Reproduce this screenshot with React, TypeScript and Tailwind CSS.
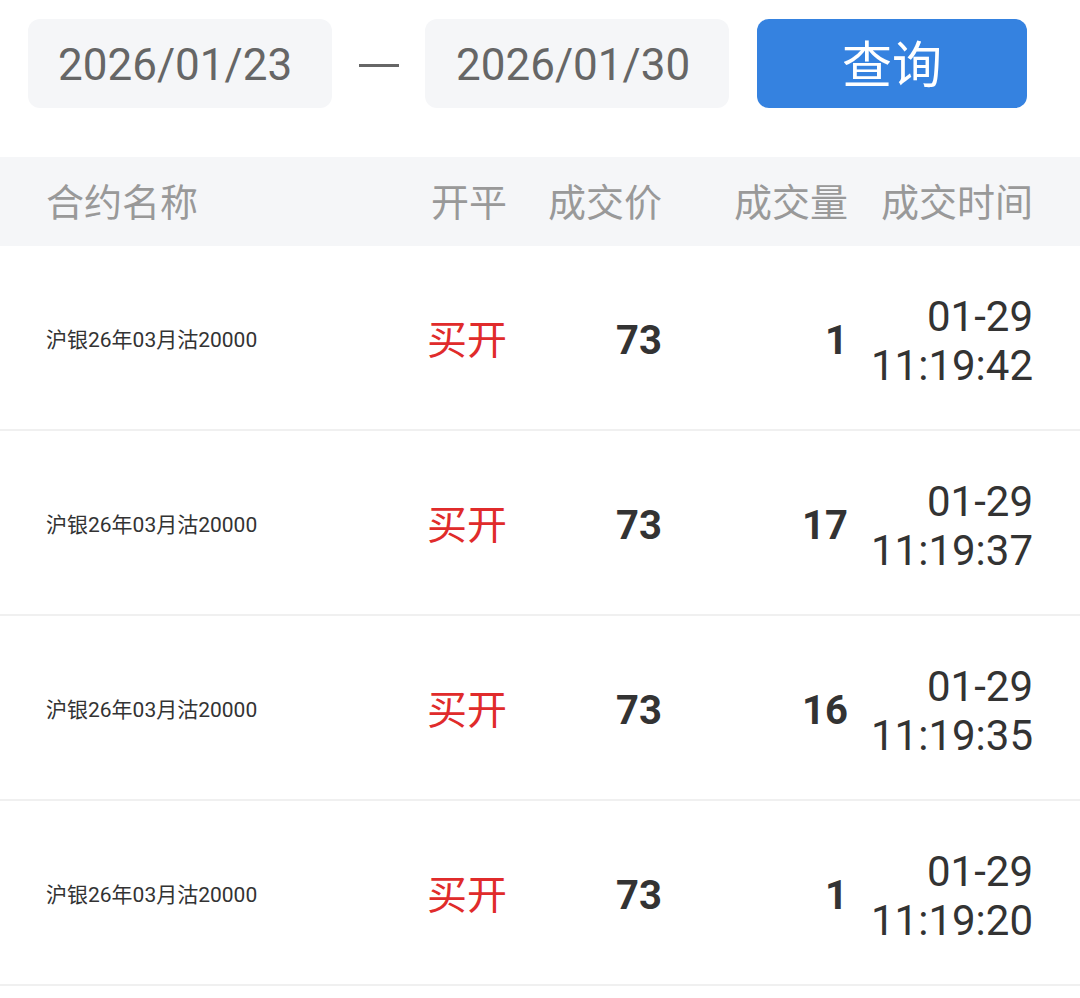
type Trade = {
  name: string;
  side: string;
  price: number;
  qty: number;
  date: string;
  time: string;
};

const trades: Trade[] = [
  { name: "沪银26年03月沽20000", side: "买开", price: 73, qty: 1, date: "01-29", time: "11:19:42" },
  { name: "沪银26年03月沽20000", side: "买开", price: 73, qty: 17, date: "01-29", time: "11:19:37" },
  { name: "沪银26年03月沽20000", side: "买开", price: 73, qty: 16, date: "01-29", time: "11:19:35" },
  { name: "沪银26年03月沽20000", side: "买开", price: 73, qty: 1, date: "01-29", time: "11:19:20" },
];

// column template shared by header and rows
const cols = "grid grid-cols-[354px_107px_155px_186px_185px] px-[46px] items-center";

const App = () => {
  return (
    <div
      className="w-[1080px] min-h-[998px] bg-white"
      style={{ fontFamily: 'Roboto, "Noto Sans CJK SC", sans-serif' }}
    >
      {/* date range + query */}
      <div className="flex items-center px-[28px] pt-[19px]">
        <div className="w-[304px] h-[89px] rounded-[12px] bg-[#f5f6f8] flex items-center pl-[30px] pt-[3px] text-[44px] text-[#666]">
          2026/01/23
        </div>
        <div className="w-[93px] flex justify-center pt-[3px]">
          <div className="w-[40px] h-[3px] bg-[#666]" />
        </div>
        <div className="w-[304px] h-[89px] rounded-[12px] bg-[#f5f6f8] flex items-center pl-[31px] pt-[3px] text-[44px] text-[#666]">
          2026/01/30
        </div>
        <button className="ml-[28px] w-[270px] h-[89px] rounded-[12px] bg-[#3582e0] text-white text-[50px] pt-[5px] flex items-center justify-center">
          查询
        </button>
      </div>

      {/* table header */}
      <div className={`${cols} mt-[49px] h-[89px] pt-[3px] bg-[#f5f6f8] text-[38px] text-[#999]`}>
        <div>合约名称</div>
        <div className="text-right">开平</div>
        <div className="text-right">成交价</div>
        <div className="text-right">成交量</div>
        <div className="text-right">成交时间</div>
      </div>

      {trades.map((t, i) => (
        <div key={i} className={`${cols} h-[185px] pt-[6px] border-b-2 border-[#f0f0f0] text-[#333]`}>
          <div className="text-[21px]">{t.name}</div>
          <div className="text-right text-[40px] text-[#e02b2b]">{t.side}</div>
          <div className="text-right text-[40px] font-bold">{t.price}</div>
          <div className="text-right text-[40px] font-bold">{t.qty}</div>
          <div className="text-right text-[42px] leading-[49px]">
            <div>{t.date}</div>
            <div>{t.time}</div>
          </div>
        </div>
      ))}
    </div>
  );
};

export default App;
